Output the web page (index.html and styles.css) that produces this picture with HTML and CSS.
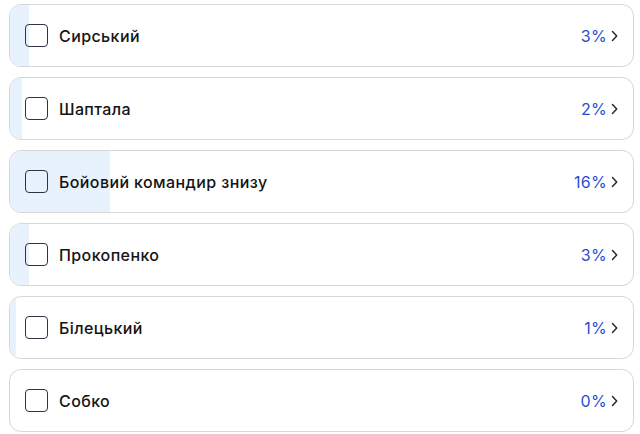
FILE: index.html
```html
<!DOCTYPE html>
<html lang="uk">
<head>
<meta charset="utf-8">
<link rel="stylesheet" href="styles.css">
</head>
<body>
<div class="list">
  <div class="card"><div class="fill" style="width:3%"></div><span class="box"></span><span class="name">Сирський</span><span class="pct">3%</span><svg class="chev" viewBox="0 0 7 12"><path d="M1.5 1.5l4.2 4.5-4.2 4.5"/></svg></div>
  <div class="card"><div class="fill" style="width:2%"></div><span class="box"></span><span class="name">Шаптала</span><span class="pct">2%</span><svg class="chev" viewBox="0 0 7 12"><path d="M1.5 1.5l4.2 4.5-4.2 4.5"/></svg></div>
  <div class="card"><div class="fill" style="width:16%"></div><span class="box"></span><span class="name">Бойовий командир знизу</span><span class="pct">16%</span><svg class="chev" viewBox="0 0 7 12"><path d="M1.5 1.5l4.2 4.5-4.2 4.5"/></svg></div>
  <div class="card"><div class="fill" style="width:3%"></div><span class="box"></span><span class="name">Прокопенко</span><span class="pct">3%</span><svg class="chev" viewBox="0 0 7 12"><path d="M1.5 1.5l4.2 4.5-4.2 4.5"/></svg></div>
  <div class="card"><div class="fill" style="width:1%"></div><span class="box"></span><span class="name">Білецький</span><span class="pct">1%</span><svg class="chev" viewBox="0 0 7 12"><path d="M1.5 1.5l4.2 4.5-4.2 4.5"/></svg></div>
  <div class="card"><div class="fill" style="width:0%"></div><span class="box"></span><span class="name">Собко</span><span class="pct">0%</span><svg class="chev" viewBox="0 0 7 12"><path d="M1.5 1.5l4.2 4.5-4.2 4.5"/></svg></div>
</div>
</body>
</html>
```
FILE: styles.css
```css
html, body { margin: 0; padding: 0; background: #fff; }
body { font-family: Inter, "Noto Sans", sans-serif; }
.list {
  display: flex;
  flex-direction: column;
  gap: 10px;
  padding: 4px 6px 0 9px;
}
.card {
  position: relative;
  overflow: hidden;
  height: 61px;
  border: 1px solid #d6d6d8;
  border-radius: 12px;
  display: flex;
  align-items: center;
  padding: 0 15px 0 15px;
  background: #fff;
}
.fill {
  position: absolute;
  left: 0; top: 0; bottom: 0;
  background: #e8f2fd;
}
.box {
  position: relative;
  width: 21px;
  height: 21px;
  border: 1.5px solid #2f3540;
  border-radius: 4px;
  flex: none;
}
.name {
  position: relative;
  margin-left: 11px;
  font-size: 16px;
  font-weight: 500;
  letter-spacing: 0.4px;
  color: #141414;
  flex: 1;
}
.pct {
  position: relative;
  font-size: 16px;
  letter-spacing: 0.3px;
  color: #1d4fd0;
}
.chev {
  position: relative;
  width: 7px;
  height: 12px;
  margin-left: 4px;
  fill: none;
  stroke: #2a2a2a;
  stroke-width: 1.5;
  stroke-linecap: round;
  stroke-linejoin: round;
}
```
